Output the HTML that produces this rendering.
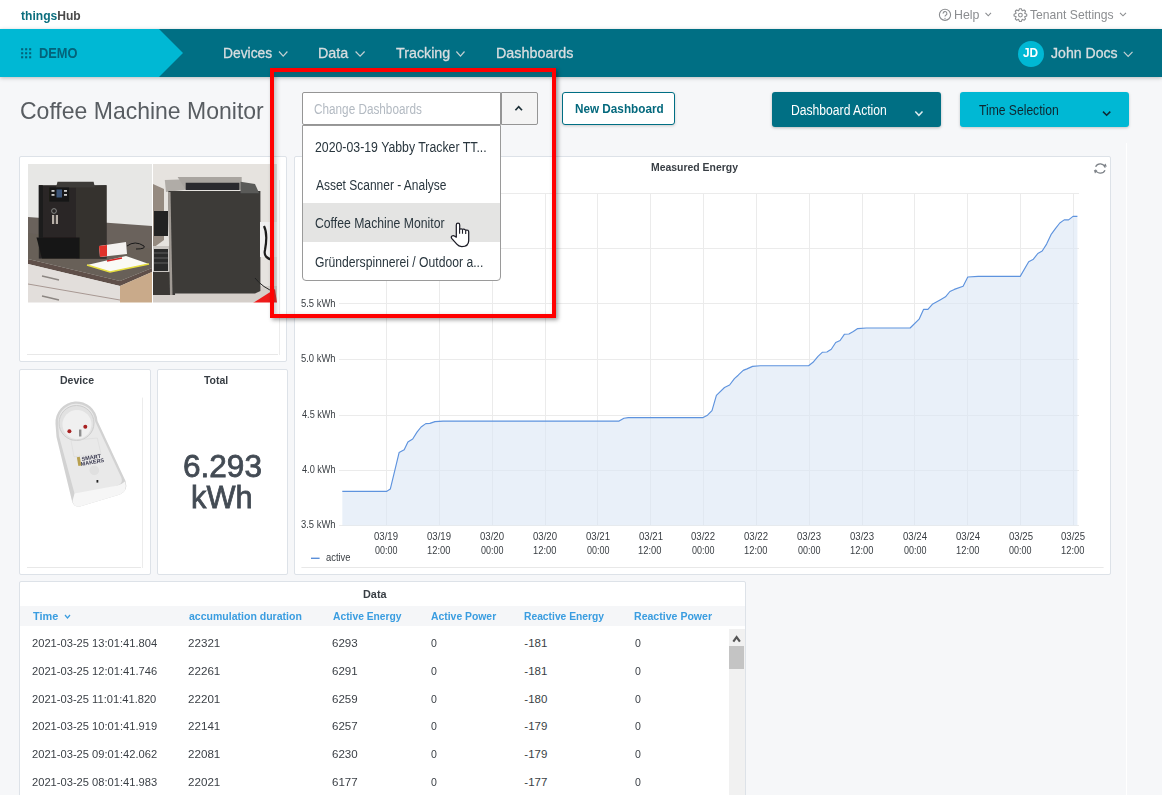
<!DOCTYPE html>
<html><head><meta charset="utf-8"><title>thingsHub</title>
<style>
html,body{margin:0;padding:0;}
body{width:1162px;height:795px;overflow:hidden;background:#f6f7f9;position:relative;font-family:"Liberation Sans",sans-serif;}
.t{position:absolute;line-height:1;white-space:nowrap;transform-origin:0 0;}
.abs{position:absolute;}
.card{position:absolute;background:#fff;border:1px solid #dde2e8;border-radius:2px;box-sizing:border-box;}
svg{position:absolute;left:0;top:0;overflow:visible;}
</style></head><body>
<!-- top bar -->
<div class="abs" style="left:0;top:0;width:1162px;height:29px;background:#fff"></div>
<!-- nav -->
<div class="abs" style="left:0;top:29px;width:1162px;height:48px;background:#006f84;box-shadow:0 1px 4px rgba(0,0,0,0.25)"></div>
<!-- right vertical line -->
<div class="abs" style="left:1126px;top:143px;width:1px;height:660px;background:#ffffff"></div>
<!-- cards -->
<div class="card" style="left:19px;top:156px;width:268px;height:206px"></div>
<div class="card" style="left:19px;top:369px;width:132px;height:206px"></div>
<div class="card" style="left:157px;top:369px;width:131px;height:206px"></div>
<div class="card" style="left:294px;top:156px;width:817px;height:419px"></div>
<div class="card" style="left:19px;top:581px;width:727px;height:240px"></div>
<div class="abs" style="left:20px;top:606px;width:725px;height:20px;background:#f5f6f8"></div>

<svg width="1162" height="795" viewBox="0 0 1162 795">
 <!-- nav cyan arrow -->
 <polygon points="0,29 159,29 183,53 159,77 0,77" fill="#00b8d4"/>
 <rect x="21.1" y="48.2" width="2.1" height="2.1" fill="#03637a"/><rect x="25.1" y="48.2" width="2.1" height="2.1" fill="#03637a"/><rect x="29.1" y="48.2" width="2.1" height="2.1" fill="#03637a"/><rect x="21.1" y="52.2" width="2.1" height="2.1" fill="#03637a"/><rect x="25.1" y="52.2" width="2.1" height="2.1" fill="#03637a"/><rect x="29.1" y="52.2" width="2.1" height="2.1" fill="#03637a"/><rect x="21.1" y="56.2" width="2.1" height="2.1" fill="#03637a"/><rect x="25.1" y="56.2" width="2.1" height="2.1" fill="#03637a"/><rect x="29.1" y="56.2" width="2.1" height="2.1" fill="#03637a"/>
 <polyline points="279,51.5 283.2,56.2 287.4,51.5" fill="none" stroke="#c3d0d3" stroke-width="1.2"/>
 <polyline points="355.6,51.5 360.1,56.2 364.6,51.5" fill="none" stroke="#c3d0d3" stroke-width="1.2"/>
 <polyline points="456.4,51.5 460.45,56.2 464.5,51.5" fill="none" stroke="#c3d0d3" stroke-width="1.2"/>
 <polyline points="1123.8,51.8 1128.15,56.3 1132.5,51.8" fill="none" stroke="#c3d0d3" stroke-width="1.2"/>
 <circle cx="1031" cy="54" r="13" fill="#00b8d4"/>
 <!-- top bar icons -->
 <circle cx="945" cy="14.8" r="5.6" fill="none" stroke="#8b8d90" stroke-width="1.1"/>
 <path d="M943.1,13.6 a1.9,1.9 0 1 1 2.7,1.6 c-0.6,0.3 -0.8,0.6 -0.8,1.4" fill="none" stroke="#8b8d90" stroke-width="1.1"/>
 <circle cx="945" cy="18.3" r="0.65" fill="#8b8d90"/>
 <polyline points="985.5,12.8 988.25,15.8 991,12.8" fill="none" stroke="#8b8d90" stroke-width="1.1"/>
 <g transform="translate(1020.4,15.1)" fill="none" stroke="#8b8d90" stroke-width="1.1">
   <circle r="1.9"/>
   <path d="M-1.76,-4.25 L-0.89,-6.34 L0.89,-6.34 L1.76,-4.25 L3.85,-5.11 L5.11,-3.85 L4.25,-1.76 L6.34,-0.89 L6.34,0.89 L4.25,1.76 L5.11,3.85 L3.85,5.11 L1.76,4.25 L0.89,6.34 L-0.89,6.34 L-1.76,4.25 L-3.85,5.11 L-5.11,3.85 L-4.25,1.76 L-6.34,0.89 L-6.34,-0.89 L-4.25,-1.76 L-5.11,-3.85 L-3.85,-5.11 Z" stroke-linejoin="round"/>
 </g>
 <polyline points="1120,12.8 1123.0,15.8 1126,12.8" fill="none" stroke="#8b8d90" stroke-width="1.1"/>
</svg>

<!-- select -->
<div class="abs" style="left:302px;top:92px;width:199px;height:33px;background:#fff;border:1px solid #959595;box-sizing:border-box;border-radius:2px 0 0 2px"></div>
<div class="abs" style="left:501px;top:92px;width:37px;height:33px;background:#f4f4f4;border:1px solid #959595;box-sizing:border-box;border-radius:0 2px 2px 0"></div>
<!-- buttons -->
<div class="abs" style="left:562px;top:92px;width:113px;height:33px;background:#fff;border:1px solid #006f84;box-sizing:border-box;border-radius:3px;box-shadow:0 1px 3px rgba(0,0,0,0.18)"></div>
<div class="abs" style="left:772px;top:92px;width:169px;height:35px;background:#006f84;border-radius:3px;box-shadow:0 1px 3px rgba(0,0,0,0.25)"></div>
<div class="abs" style="left:960px;top:92px;width:169px;height:35px;background:#00b8d4;border-radius:3px;box-shadow:0 1px 3px rgba(0,0,0,0.2)"></div>

<!-- photos -->
<svg width="1162" height="795" viewBox="0 0 1162 795">
 <defs>
  <clipPath id="c1"><rect x="28" y="164" width="124" height="138.6"/></clipPath>
  <clipPath id="c2"><rect x="153" y="164" width="124" height="138.6"/></clipPath>
  <filter id="soft" x="-5%" y="-5%" width="110%" height="110%"><feGaussianBlur stdDeviation="0.5"/></filter>
  <linearGradient id="wall1" x1="0" y1="0" x2="1" y2="0"><stop offset="0" stop-color="#e9e8e6"/><stop offset="1" stop-color="#e2e1de"/></linearGradient>
 </defs>
 <g clip-path="url(#c1)" filter="url(#soft)">
  <rect x="28" y="164" width="124" height="139" fill="#e7e7e5"/>
  <!-- backsplash -->
  <polygon points="28,217 152,226 152,250 28,234" fill="#6a625c"/>
  <!-- counter top -->
  <polygon points="28,233 152,249 152,268 120,281 28,259" fill="#676059"/>
  <!-- counter front edge -->
  <polygon points="28,259 120,281 120,286 28,264" fill="#5e5048"/>
  <polygon points="120,281 152,268 152,272 120,286" fill="#5e5048"/>
  <!-- drawers -->
  <polygon points="28,264 120,286 120,303 28,303" fill="#e2dedb"/>
  <line x1="28" y1="284" x2="120" y2="300" stroke="#a0908a" stroke-width="0.9"/>
  <path d="M42,276 q9,2 17,4" stroke="#8c8682" stroke-width="1.4" fill="none"/>
  <path d="M42,296 q9,2 17,4" stroke="#8c8682" stroke-width="1.4" fill="none"/>
  <!-- wood side -->
  <polygon points="120,286 152,272 152,303 120,303" fill="#c9aa8a"/>
  <!-- machine -->
  <rect x="38.8" y="185.2" width="67.7" height="73.4" fill="#2a2826"/>
  <polygon points="76,187 106.5,185.2 106.5,258.6 76,258.6" fill="#35322f"/>
  <rect x="38.8" y="185.2" width="4" height="52" fill="#1c1b1a"/>
  <polygon points="57.5,181.7 93.6,181.7 95,187.5 56,187.5" fill="#3e3b38"/>
  <rect x="49.3" y="187.5" width="19.8" height="14" fill="#151515"/>
  <rect x="56.5" y="189.5" width="5.5" height="8" fill="#3c5478"/>
  <rect x="51.5" y="190" width="3" height="1.8" fill="#ccc"/><rect x="51.5" y="194" width="3" height="1.8" fill="#ccc"/>
  <rect x="64" y="190" width="3" height="1.8" fill="#ccc"/><rect x="64" y="194" width="3" height="1.8" fill="#ccc"/>
  <rect x="52" y="215" width="2.2" height="9" fill="#b8b0a8"/><rect x="55.8" y="215" width="2.2" height="9" fill="#b8b0a8"/>
  <circle cx="54" cy="211" r="2.4" fill="none" stroke="#999" stroke-width="0.8"/>
  <polygon points="36.5,237.6 79.6,237.6 79.6,258.6 42,258.6" fill="#181716"/>
  <!-- red box -->
  <polygon points="99,246 126,242 127,254 100,257" fill="#f4f2f0"/>
  <polygon points="99,246 107,245 107,256 100,257" fill="#e0302a"/>
  <path d="M127,246 q8,-6 17,0 q2,3 -8,3" stroke="#1a1a1a" stroke-width="1" fill="none"/>
  <!-- paper -->
  <polygon points="87,265 126,256 149,264 110,272" fill="#fafaf6"/>
  <polyline points="87,265 110,272 149,264" fill="none" stroke="#e6de40" stroke-width="1.6"/>
  <line x1="107" y1="261" x2="122" y2="258" stroke="#d82020" stroke-width="1.3"/>
 </g>
 <g clip-path="url(#c2)" filter="url(#soft)">
  <rect x="153" y="164" width="124" height="139" fill="#e6e3df"/>
  <polygon points="153,184 164,189 164,240 153,248" fill="#958a80"/>
  <!-- floor -->
  <rect x="153" y="286" width="124" height="17" fill="#d5cfca"/>
  <polygon points="153,246 176,246 176,295 153,295" fill="#c9c5c1"/>
  <rect x="154" y="249" width="14" height="22" fill="#2c2c2c"/>
  <line x1="154" y1="253" x2="168" y2="253" stroke="#777" stroke-width="0.7"/>
  <line x1="154" y1="258" x2="168" y2="258" stroke="#777" stroke-width="0.7"/>
  <line x1="154" y1="263" x2="168" y2="263" stroke="#777" stroke-width="0.7"/>
  <rect x="153" y="272" width="22" height="23" fill="#3a3836"/>
  <rect x="154" y="211" width="14" height="25" fill="#242424"/>
  <!-- left lid part -->
  <polygon points="164.8,180 185.7,179.3 185.7,189.8 166,192" fill="#b0aca7"/>
  <!-- body -->
  <polygon points="168.3,191 260.4,191 260.4,291 255,293.6 170,293.6" fill="#3c3b39"/>
  <polygon points="168,192 170.5,192 172.5,295 170,295" fill="#a09a94"/>
  <!-- top lid -->
  <polygon points="177.6,177 241.7,177 241.7,189.8 185.7,189.8" fill="#a9a5a0"/>
  <polygon points="185.7,182.8 239.4,182.8 239.4,190 185.7,190" fill="#2c2c2e"/>
  <polygon points="240.5,181.7 255,184 259.2,193.3 240.5,193.3" fill="#5a5a58"/>
  <!-- right plug/cable -->
  <rect x="260" y="222" width="17" height="35" fill="#f0f0f0"/>
  <path d="M264,226 q4,8 1,24 q-2,8 8,10" stroke="#1c1c1c" stroke-width="2.2" fill="none"/>
  <path d="M255,278 q8,10 20,14" stroke="#222" stroke-width="1" fill="none"/>
  <polygon points="253,303 275,289 277,303" fill="#ee1c1c"/>
 </g>
 <!-- inner faint lines image card -->
 <line x1="279.5" y1="180" x2="279.5" y2="355" stroke="#ececec" stroke-width="1"/>
 <line x1="27" y1="354.5" x2="278" y2="354.5" stroke="#e8e8e8" stroke-width="1"/>
 <line x1="142.5" y1="397.6" x2="142.5" y2="568" stroke="#ececec" stroke-width="1"/>
 <line x1="27" y1="567.5" x2="141" y2="567.5" stroke="#e8e8e8" stroke-width="1"/>
 <!-- smart plug -->
 <g filter="url(#soft)">
  <path d="M55.5,424 A21,21 0 0 1 97.5,421 L125.5,481 Q128.5,491 120,494.5 L80,506.5 Q73.5,507.5 72,501 L56.5,437 Z" fill="#d2d2d2"/>
  <path d="M58,423.5 A18.5,18.5 0 0 1 95,421 L121.5,478 Q123,483.5 117.5,485.5 L79.5,496.5 Q75.5,497.5 74.5,493.5 L59,436 Z" fill="#e9e9e9"/>
  <path d="M74.5,493.5 L117.5,485.5 Q123,483.5 125,481.5 Q128,491 120,494.5 L80,506.5 Q73.5,507.5 72.5,501 Z" fill="#f6f6f6"/>
  <circle cx="76.5" cy="423" r="17.5" fill="#e2e2e2" stroke="#cdcdcd" stroke-width="1"/>
  <circle cx="77" cy="424.5" r="14.5" fill="#f0f0f0"/>
  <polygon points="71,440.5 97.3,438 101,453.8 74,456.8" fill="none" stroke="#dadada" stroke-width="0.6"/>
  <circle cx="69.4" cy="431.2" r="2" fill="#a82020"/>
  <circle cx="85.3" cy="426.7" r="2" fill="#a82020"/>
  <rect x="79" y="429.5" width="2.4" height="7" fill="#8f8f8f"/>
  <text x="82" y="461" font-family="Liberation Sans" font-size="5.5" font-weight="bold" fill="#3a3a50" transform="rotate(-10 82 461)">SMART</text>
  <text x="81" y="466" font-family="Liberation Sans" font-size="5.5" font-weight="bold" fill="#3a3a50" transform="rotate(-10 81 466)">MAKERS</text>
  <rect x="77.5" y="457" width="3" height="9" fill="#b8a050" transform="rotate(-10 78 461)"/>
  <circle cx="94.3" cy="470.4" r="4.8" fill="#e0e0e0"/>
  <rect x="96.5" y="480" width="1.8" height="2.6" fill="#222"/>
 </g>
 <!-- refresh icon -->
 <g fill="none" stroke="#7d8288" stroke-width="1.3">
  <path d="M1095.6,166.8 a5.2,5.2 0 0 1 9.6,0.8"/>
  <path d="M1105,170.2 a5.2,5.2 0 0 1 -9.6,-0.6"/>
 </g>
 <polygon points="1103.2,166 1106.8,166.8 1105.6,163.4" fill="#7d8288"/>
 <polygon points="1097.4,170.8 1093.8,170 1095,173.4" fill="#7d8288"/>
 <!-- chart -->
 <g stroke="#ebebeb" stroke-width="1"><line x1="339" y1="193.5" x2="1079" y2="193.5"/>
<line x1="339" y1="248.5" x2="1079" y2="248.5"/>
<line x1="339" y1="303.5" x2="1079" y2="303.5"/>
<line x1="339" y1="359.5" x2="1079" y2="359.5"/>
<line x1="339" y1="415.5" x2="1079" y2="415.5"/>
<line x1="339" y1="470.5" x2="1079" y2="470.5"/>
<line x1="339" y1="525.5" x2="1079" y2="525.5"/>
<line x1="386.5" y1="193" x2="386.5" y2="526"/>
<line x1="439.5" y1="193" x2="439.5" y2="526"/>
<line x1="492.5" y1="193" x2="492.5" y2="526"/>
<line x1="545.5" y1="193" x2="545.5" y2="526"/>
<line x1="597.5" y1="193" x2="597.5" y2="526"/>
<line x1="650.5" y1="193" x2="650.5" y2="526"/>
<line x1="703.5" y1="193" x2="703.5" y2="526"/>
<line x1="756.5" y1="193" x2="756.5" y2="526"/>
<line x1="809.5" y1="193" x2="809.5" y2="526"/>
<line x1="862.5" y1="193" x2="862.5" y2="526"/>
<line x1="914.5" y1="193" x2="914.5" y2="526"/>
<line x1="967.5" y1="193" x2="967.5" y2="526"/>
<line x1="1020.5" y1="193" x2="1020.5" y2="526"/>
<line x1="1073.5" y1="193" x2="1073.5" y2="526"/></g>
 <path d="M342.3,491.4 L386.5,491.4 L390.3,489.1 L399.1,452.6 L404.2,449.7 L407.9,441.9 L412.7,439.0 L417.0,432.1 L421.1,427.0 L425.8,423.6 L429.9,423.4 L435.0,421.6 L443.1,421.1 L619.1,421.1 L623.9,418.2 L628.3,417.6 L703.1,417.6 L707.5,415.2 L712.0,410.7 L716.4,395.3 L724.5,387.5 L729.6,385.0 L734.4,378.6 L738.2,375.2 L743.2,370.4 L747.0,368.9 L752.6,366.4 L760.2,365.7 L808.6,365.7 L813.0,362.3 L818.0,356.4 L822.5,352.2 L826.9,352.0 L831.3,349.3 L835.7,342.5 L840.1,340.5 L844.5,334.2 L848.9,334.0 L853.3,331.4 L857.7,328.6 L866.3,328.0 L910.1,328.0 L919.1,319.2 L923.5,309.4 L927.9,309.4 L932.3,304.3 L940.5,299.7 L945.5,296.8 L949.9,291.5 L954.3,289.4 L963.1,286.2 L967.8,277.0 L978.2,276.4 L1020.2,276.4 L1028.7,261.7 L1033.4,259.2 L1037.8,253.5 L1042.2,251.0 L1046.6,244.1 L1051.0,234.7 L1055.4,228.7 L1059.8,223.0 L1064.2,219.9 L1068.6,219.9 L1073.0,216.4 L1077.4,216.4 L1077.4,525.5 L342.3,525.5 Z" fill="#dce6f6" fill-opacity="0.62"/>
 <path d="M342.3,491.4 L386.5,491.4 L390.3,489.1 L399.1,452.6 L404.2,449.7 L407.9,441.9 L412.7,439.0 L417.0,432.1 L421.1,427.0 L425.8,423.6 L429.9,423.4 L435.0,421.6 L443.1,421.1 L619.1,421.1 L623.9,418.2 L628.3,417.6 L703.1,417.6 L707.5,415.2 L712.0,410.7 L716.4,395.3 L724.5,387.5 L729.6,385.0 L734.4,378.6 L738.2,375.2 L743.2,370.4 L747.0,368.9 L752.6,366.4 L760.2,365.7 L808.6,365.7 L813.0,362.3 L818.0,356.4 L822.5,352.2 L826.9,352.0 L831.3,349.3 L835.7,342.5 L840.1,340.5 L844.5,334.2 L848.9,334.0 L853.3,331.4 L857.7,328.6 L866.3,328.0 L910.1,328.0 L919.1,319.2 L923.5,309.4 L927.9,309.4 L932.3,304.3 L940.5,299.7 L945.5,296.8 L949.9,291.5 L954.3,289.4 L963.1,286.2 L967.8,277.0 L978.2,276.4 L1020.2,276.4 L1028.7,261.7 L1033.4,259.2 L1037.8,253.5 L1042.2,251.0 L1046.6,244.1 L1051.0,234.7 L1055.4,228.7 L1059.8,223.0 L1064.2,219.9 L1068.6,219.9 L1073.0,216.4 L1077.4,216.4" fill="none" stroke="#5e93de" stroke-width="1.15" stroke-linejoin="round"/>
 <line x1="311" y1="558.3" x2="319.6" y2="558.3" stroke="#5b8fd9" stroke-width="1.4"/>
 <line x1="301.4" y1="567.5" x2="1103.6" y2="567.5" stroke="#e8e8e8" stroke-width="1"/>
 <!-- table scrollbar -->
 <rect x="729" y="629" width="16" height="170" fill="#f1f1f1"/>
 <rect x="729" y="646" width="15" height="23" fill="#c4c4c4"/>
 <polyline points="733.3,641.6 736.6,637.2 739.9,641.6" fill="none" stroke="#555" stroke-width="2.2"/>
 <!-- table header chevron -->
 <polyline points="65,615 67.5,618 70,615" fill="none" stroke="#3a9de0" stroke-width="1.2"/>
 <!-- select caret -->
 <polyline points="515.4,110.3 518.7,106.7 522,110.3" fill="none" stroke="#1e3038" stroke-width="1.7"/>
 <!-- button chevrons -->
 <polyline points="915.3,111.6 918.9,115.3 922.5,111.6" fill="none" stroke="#dcebee" stroke-width="1.5"/>
 <polyline points="1103,111.6 1106.65,115.3 1110.3,111.6" fill="none" stroke="#0e2630" stroke-width="1.5"/>
</svg>

<!-- dropdown menu -->
<div class="abs" style="left:302px;top:125px;width:199px;height:156px;background:#fff;border:1px solid #9a9a9a;box-sizing:border-box;border-radius:0 0 4px 4px"></div>
<div class="abs" style="left:303px;top:203px;width:197px;height:39px;background:#e4e4e3"></div>

<div class="t" style="left:21.20px;top:9.90px;font-size:12px;font-weight:700;color:#0b6e7e;transform:scaleX(1.0068);">things<span style="color:#4a4a4a">Hub</span></div>
<div class="t" style="left:954.05px;top:7.95px;font-size:13px;font-weight:400;color:#8b8d90;transform:scaleX(0.9520);">Help</div>
<div class="t" style="left:1029.80px;top:7.95px;font-size:13px;font-weight:400;color:#8b8d90;transform:scaleX(0.9337);">Tenant Settings</div>
<div class="t" style="left:38.97px;top:44.62px;font-size:15.5px;font-weight:700;color:#03637a;transform:scaleX(0.8267);">DEMO</div>
<div class="t" style="left:222.68px;top:45.45px;font-size:15px;font-weight:400;color:#d9dee0;transform:scaleX(0.9231);-webkit-text-stroke:0.3px #d9dee0;">Devices</div>
<div class="t" style="left:317.75px;top:45.45px;font-size:15px;font-weight:400;color:#d9dee0;transform:scaleX(0.9548);-webkit-text-stroke:0.3px #d9dee0;">Data</div>
<div class="t" style="left:395.70px;top:45.45px;font-size:15px;font-weight:400;color:#d9dee0;transform:scaleX(0.9518);-webkit-text-stroke:0.3px #d9dee0;">Tracking</div>
<div class="t" style="left:495.54px;top:45.45px;font-size:15px;font-weight:400;color:#d9dee0;transform:scaleX(0.9563);-webkit-text-stroke:0.3px #d9dee0;">Dashboards</div>
<div class="t" style="left:1023.40px;top:46.15px;font-size:13px;font-weight:700;color:#ffffff;transform:scaleX(0.9125);">JD</div>
<div class="t" style="left:1050.50px;top:45.70px;font-size:14px;font-weight:400;color:#d9dee0;transform:scaleX(1.0061);-webkit-text-stroke:0.3px #d9dee0;">John Docs</div>
<div class="t" style="left:19.81px;top:100.28px;font-size:23.2px;font-weight:400;color:#585d62;transform:scaleX(0.9918);">Coffee Machine Monitor</div>
<div class="t" style="left:313.76px;top:102.10px;font-size:14px;font-weight:400;color:#b3bac2;transform:scaleX(0.8394);">Change Dashboards</div>
<div class="t" style="left:314.92px;top:139.80px;font-size:14px;font-weight:400;color:#29363e;transform:scaleX(0.8788);">2020-03-19 Yabby Tracker TT...</div>
<div class="t" style="left:315.80px;top:177.60px;font-size:14px;font-weight:400;color:#29363e;transform:scaleX(0.8553);">Asset Scanner - Analyse</div>
<div class="t" style="left:314.93px;top:215.50px;font-size:14px;font-weight:400;color:#29363e;transform:scaleX(0.8728);">Coffee Machine Monitor</div>
<div class="t" style="left:314.93px;top:254.70px;font-size:14px;font-weight:400;color:#29363e;transform:scaleX(0.8688);">Gründerspinnerei / Outdoor a...</div>
<div class="t" style="left:575.00px;top:101.85px;font-size:13px;font-weight:700;color:#04697d;transform:scaleX(0.9021);">New Dashboard</div>
<div class="t" style="left:790.83px;top:102.50px;font-size:14px;font-weight:400;color:#ffffff;transform:scaleX(0.8670);">Dashboard Action</div>
<div class="t" style="left:979.10px;top:102.50px;font-size:14px;font-weight:400;color:#0e2630;transform:scaleX(0.8659);">Time Selection</div>
<div class="t" style="left:651.45px;top:162.45px;font-size:11px;font-weight:700;color:#383e44;transform:scaleX(0.9484);">Measured Energy</div>
<div class="t" style="left:60.18px;top:375.23px;font-size:11.5px;font-weight:700;color:#383e44;transform:scaleX(0.9167);">Device</div>
<div class="t" style="left:203.70px;top:375.23px;font-size:11.5px;font-weight:700;color:#383e44;transform:scaleX(0.9115);">Total</div>
<div class="t" style="left:183.00px;top:451.03px;font-size:31.5px;font-weight:400;color:#434b54;transform:scaleX(1.0013);-webkit-text-stroke:0.8px #434b54;">6.293</div>
<div class="t" style="left:191.45px;top:482.12px;font-size:31.5px;font-weight:400;color:#434b54;transform:scaleX(0.9763);-webkit-text-stroke:0.8px #434b54;">kWh</div>
<div class="t" style="left:301.26px;top:298.86px;font-size:10px;font-weight:400;color:#383d42;transform:scaleX(0.9429);">5.5 kWh</div>
<div class="t" style="left:301.26px;top:354.19px;font-size:10px;font-weight:400;color:#383d42;transform:scaleX(0.9429);">5.0 kWh</div>
<div class="t" style="left:302.20px;top:409.52px;font-size:10px;font-weight:400;color:#383d42;transform:scaleX(0.9167);">4.5 kWh</div>
<div class="t" style="left:302.20px;top:464.85px;font-size:10px;font-weight:400;color:#383d42;transform:scaleX(0.9167);">4.0 kWh</div>
<div class="t" style="left:301.26px;top:520.18px;font-size:10px;font-weight:400;color:#383d42;transform:scaleX(0.9429);">3.5 kWh</div>
<div class="t" style="left:374.30px;top:531.70px;font-size:10px;font-weight:400;color:#383d42;transform:scaleX(0.9600);">03/19</div>
<div class="t" style="left:375.10px;top:545.60px;font-size:10px;font-weight:400;color:#383d42;transform:scaleX(0.8960);">00:00</div>
<div class="t" style="left:427.15px;top:531.70px;font-size:10px;font-weight:400;color:#383d42;transform:scaleX(0.9600);">03/19</div>
<div class="t" style="left:427.02px;top:545.60px;font-size:10px;font-weight:400;color:#383d42;transform:scaleX(0.9333);">12:00</div>
<div class="t" style="left:480.00px;top:531.70px;font-size:10px;font-weight:400;color:#383d42;transform:scaleX(0.9600);">03/20</div>
<div class="t" style="left:480.80px;top:545.60px;font-size:10px;font-weight:400;color:#383d42;transform:scaleX(0.8960);">00:00</div>
<div class="t" style="left:532.85px;top:531.70px;font-size:10px;font-weight:400;color:#383d42;transform:scaleX(0.9600);">03/20</div>
<div class="t" style="left:532.72px;top:545.60px;font-size:10px;font-weight:400;color:#383d42;transform:scaleX(0.9333);">12:00</div>
<div class="t" style="left:585.70px;top:531.70px;font-size:10px;font-weight:400;color:#383d42;transform:scaleX(0.9600);">03/21</div>
<div class="t" style="left:586.50px;top:545.60px;font-size:10px;font-weight:400;color:#383d42;transform:scaleX(0.8960);">00:00</div>
<div class="t" style="left:638.55px;top:531.70px;font-size:10px;font-weight:400;color:#383d42;transform:scaleX(0.9600);">03/21</div>
<div class="t" style="left:638.42px;top:545.60px;font-size:10px;font-weight:400;color:#383d42;transform:scaleX(0.9333);">12:00</div>
<div class="t" style="left:691.40px;top:531.70px;font-size:10px;font-weight:400;color:#383d42;transform:scaleX(0.9600);">03/22</div>
<div class="t" style="left:692.20px;top:545.60px;font-size:10px;font-weight:400;color:#383d42;transform:scaleX(0.8960);">00:00</div>
<div class="t" style="left:744.25px;top:531.70px;font-size:10px;font-weight:400;color:#383d42;transform:scaleX(0.9600);">03/22</div>
<div class="t" style="left:744.12px;top:545.60px;font-size:10px;font-weight:400;color:#383d42;transform:scaleX(0.9333);">12:00</div>
<div class="t" style="left:797.10px;top:531.70px;font-size:10px;font-weight:400;color:#383d42;transform:scaleX(0.9600);">03/23</div>
<div class="t" style="left:797.90px;top:545.60px;font-size:10px;font-weight:400;color:#383d42;transform:scaleX(0.8960);">00:00</div>
<div class="t" style="left:849.95px;top:531.70px;font-size:10px;font-weight:400;color:#383d42;transform:scaleX(0.9600);">03/23</div>
<div class="t" style="left:849.82px;top:545.60px;font-size:10px;font-weight:400;color:#383d42;transform:scaleX(0.9333);">12:00</div>
<div class="t" style="left:902.80px;top:531.70px;font-size:10px;font-weight:400;color:#383d42;transform:scaleX(0.9600);">03/24</div>
<div class="t" style="left:903.60px;top:545.60px;font-size:10px;font-weight:400;color:#383d42;transform:scaleX(0.8960);">00:00</div>
<div class="t" style="left:955.65px;top:531.70px;font-size:10px;font-weight:400;color:#383d42;transform:scaleX(0.9600);">03/24</div>
<div class="t" style="left:955.52px;top:545.60px;font-size:10px;font-weight:400;color:#383d42;transform:scaleX(0.9333);">12:00</div>
<div class="t" style="left:1008.50px;top:531.70px;font-size:10px;font-weight:400;color:#383d42;transform:scaleX(0.9600);">03/25</div>
<div class="t" style="left:1009.30px;top:545.60px;font-size:10px;font-weight:400;color:#383d42;transform:scaleX(0.8960);">00:00</div>
<div class="t" style="left:1061.35px;top:531.70px;font-size:10px;font-weight:400;color:#383d42;transform:scaleX(0.9600);">03/25</div>
<div class="t" style="left:1061.22px;top:545.60px;font-size:10px;font-weight:400;color:#383d42;transform:scaleX(0.9333);">12:00</div>
<div class="t" style="left:325.90px;top:552.50px;font-size:10px;font-weight:400;color:#383d42;transform:scaleX(0.9385);">active</div>
<div class="t" style="left:363.01px;top:588.55px;font-size:11px;font-weight:700;color:#383e44;transform:scaleX(0.9870);">Data</div>
<div class="t" style="left:32.70px;top:610.65px;font-size:11px;font-weight:700;color:#3a9de0;transform:scaleX(0.9920);">Time</div>
<div class="t" style="left:189.30px;top:610.65px;font-size:11px;font-weight:700;color:#3a9de0;transform:scaleX(0.9564);">accumulation duration</div>
<div class="t" style="left:333.00px;top:610.65px;font-size:11px;font-weight:700;color:#3a9de0;transform:scaleX(0.9342);">Active Energy</div>
<div class="t" style="left:430.60px;top:610.65px;font-size:11px;font-weight:700;color:#3a9de0;transform:scaleX(0.9435);">Active Power</div>
<div class="t" style="left:524.36px;top:610.65px;font-size:11px;font-weight:700;color:#3a9de0;transform:scaleX(0.9353);">Reactive Energy</div>
<div class="t" style="left:633.74px;top:610.65px;font-size:11px;font-weight:700;color:#3a9de0;transform:scaleX(0.9600);">Reactive Power</div>
<div class="t" style="left:31.73px;top:638.02px;font-size:11.5px;font-weight:400;color:#3a3f45;transform:scaleX(0.9688);">2021-03-25 13:01:41.804</div>
<div class="t" style="left:188.29px;top:638.02px;font-size:11.5px;font-weight:400;color:#3a3f45;transform:scaleX(1.0100);">22321</div>
<div class="t" style="left:332.00px;top:638.02px;font-size:11.5px;font-weight:400;color:#3a3f45;transform:scaleX(1.0042);">6293</div>
<div class="t" style="left:430.60px;top:638.02px;font-size:11.5px;font-weight:400;color:#3a3f45;transform:scaleX(0.9167);">0</div>
<div class="t" style="left:524.30px;top:638.02px;font-size:11.5px;font-weight:400;color:#3a3f45;transform:scaleX(1.0000);">-181</div>
<div class="t" style="left:634.70px;top:638.02px;font-size:11.5px;font-weight:400;color:#3a3f45;transform:scaleX(0.9167);">0</div>
<div class="t" style="left:31.73px;top:665.76px;font-size:11.5px;font-weight:400;color:#3a3f45;transform:scaleX(0.9688);">2021-03-25 12:01:41.746</div>
<div class="t" style="left:188.29px;top:665.76px;font-size:11.5px;font-weight:400;color:#3a3f45;transform:scaleX(1.0100);">22261</div>
<div class="t" style="left:332.00px;top:665.76px;font-size:11.5px;font-weight:400;color:#3a3f45;transform:scaleX(1.0042);">6291</div>
<div class="t" style="left:430.60px;top:665.76px;font-size:11.5px;font-weight:400;color:#3a3f45;transform:scaleX(0.9167);">0</div>
<div class="t" style="left:524.30px;top:665.76px;font-size:11.5px;font-weight:400;color:#3a3f45;transform:scaleX(1.0000);">-181</div>
<div class="t" style="left:634.70px;top:665.76px;font-size:11.5px;font-weight:400;color:#3a3f45;transform:scaleX(0.9167);">0</div>
<div class="t" style="left:31.73px;top:693.50px;font-size:11.5px;font-weight:400;color:#3a3f45;transform:scaleX(0.9688);">2021-03-25 11:01:41.820</div>
<div class="t" style="left:188.29px;top:693.50px;font-size:11.5px;font-weight:400;color:#3a3f45;transform:scaleX(1.0100);">22201</div>
<div class="t" style="left:332.00px;top:693.50px;font-size:11.5px;font-weight:400;color:#3a3f45;transform:scaleX(1.0042);">6259</div>
<div class="t" style="left:430.60px;top:693.50px;font-size:11.5px;font-weight:400;color:#3a3f45;transform:scaleX(0.9167);">0</div>
<div class="t" style="left:524.30px;top:693.50px;font-size:11.5px;font-weight:400;color:#3a3f45;transform:scaleX(1.0000);">-180</div>
<div class="t" style="left:634.70px;top:693.50px;font-size:11.5px;font-weight:400;color:#3a3f45;transform:scaleX(0.9167);">0</div>
<div class="t" style="left:31.73px;top:721.25px;font-size:11.5px;font-weight:400;color:#3a3f45;transform:scaleX(0.9688);">2021-03-25 10:01:41.919</div>
<div class="t" style="left:188.29px;top:721.25px;font-size:11.5px;font-weight:400;color:#3a3f45;transform:scaleX(1.0100);">22141</div>
<div class="t" style="left:332.00px;top:721.25px;font-size:11.5px;font-weight:400;color:#3a3f45;transform:scaleX(1.0042);">6257</div>
<div class="t" style="left:430.60px;top:721.25px;font-size:11.5px;font-weight:400;color:#3a3f45;transform:scaleX(0.9167);">0</div>
<div class="t" style="left:524.30px;top:721.25px;font-size:11.5px;font-weight:400;color:#3a3f45;transform:scaleX(1.0000);">-179</div>
<div class="t" style="left:634.70px;top:721.25px;font-size:11.5px;font-weight:400;color:#3a3f45;transform:scaleX(0.9167);">0</div>
<div class="t" style="left:31.73px;top:748.99px;font-size:11.5px;font-weight:400;color:#3a3f45;transform:scaleX(0.9688);">2021-03-25 09:01:42.062</div>
<div class="t" style="left:188.29px;top:748.99px;font-size:11.5px;font-weight:400;color:#3a3f45;transform:scaleX(1.0100);">22081</div>
<div class="t" style="left:332.00px;top:748.99px;font-size:11.5px;font-weight:400;color:#3a3f45;transform:scaleX(1.0042);">6230</div>
<div class="t" style="left:430.60px;top:748.99px;font-size:11.5px;font-weight:400;color:#3a3f45;transform:scaleX(0.9167);">0</div>
<div class="t" style="left:524.30px;top:748.99px;font-size:11.5px;font-weight:400;color:#3a3f45;transform:scaleX(1.0000);">-179</div>
<div class="t" style="left:634.70px;top:748.99px;font-size:11.5px;font-weight:400;color:#3a3f45;transform:scaleX(0.9167);">0</div>
<div class="t" style="left:31.73px;top:776.73px;font-size:11.5px;font-weight:400;color:#3a3f45;transform:scaleX(0.9688);">2021-03-25 08:01:41.983</div>
<div class="t" style="left:188.29px;top:776.73px;font-size:11.5px;font-weight:400;color:#3a3f45;transform:scaleX(1.0100);">22021</div>
<div class="t" style="left:332.00px;top:776.73px;font-size:11.5px;font-weight:400;color:#3a3f45;transform:scaleX(1.0042);">6177</div>
<div class="t" style="left:430.60px;top:776.73px;font-size:11.5px;font-weight:400;color:#3a3f45;transform:scaleX(0.9167);">0</div>
<div class="t" style="left:524.30px;top:776.73px;font-size:11.5px;font-weight:400;color:#3a3f45;transform:scaleX(1.0000);">-177</div>
<div class="t" style="left:634.70px;top:776.73px;font-size:11.5px;font-weight:400;color:#3a3f45;transform:scaleX(0.9167);">0</div>

<!-- red highlight rectangle -->
<div class="abs" style="left:270px;top:68px;width:286px;height:250px;border:4px solid #ff0000;box-sizing:border-box;box-shadow:2px 2px 4px rgba(0,0,0,0.38), inset 2px 2px 5px rgba(60,60,60,0.3)"></div>
<!-- cursor -->
<svg width="1162" height="795" viewBox="0 0 1162 795">
 <path d="M456.3,237.2 L456.3,225 Q456.3,223.2 458,223.2 Q459.7,223.2 459.7,225 L459.7,229.2 Q461.1,228.3 462.5,229.3 Q464,228.6 465.6,230.1 Q468.7,229.6 468.7,232 L468.7,240.5 Q468.7,246.6 461.8,246.6 Q458.6,246.6 456.8,244.2 L451.9,238.6 Q450.6,236.9 452,236 Q453.3,235.2 454.8,236.2 Z" fill="#fff" stroke="#1c1c26" stroke-width="1.25" stroke-linejoin="round"/>
 <path d="M459.6,228.8 L459.6,233.8 M462.5,229.4 L462.5,233.8 M465.7,230.2 L465.7,234" stroke="#1c1c26" stroke-width="1.1"/>
</svg>
</body></html>
